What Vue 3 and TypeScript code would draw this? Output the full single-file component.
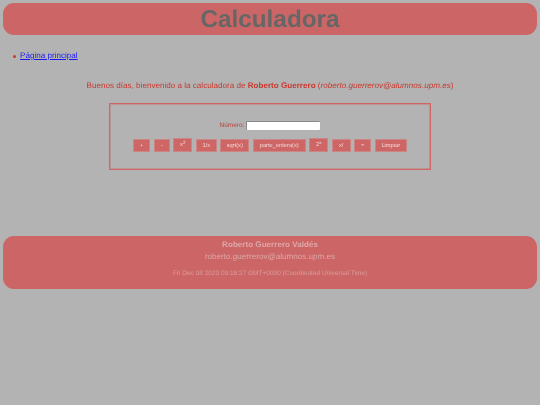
<script setup lang="ts">
const buttons: { label: string; sup?: string; cls: string }[] = [
  { label: '+', cls: 'w-plus' },
  { label: '-', cls: 'w-minus' },
  { label: 'x', sup: '2', cls: 'w-pow' },
  { label: '1/x', cls: 'w-inv' },
  { label: 'sqrt(x)', cls: 'w-sqrt' },
  { label: 'parte_entera(x)', cls: 'w-parte' },
  { label: '2', sup: 'x', cls: 'w-pow' },
  { label: 'x!', cls: 'w-fact' },
  { label: '=', cls: 'w-plus' },
  { label: 'Limpiar', cls: 'w-clear' },
]
</script>

<template>
  <div class="page">
    <header class="banner">
      <h1>Calculadora</h1>
    </header>
    <ul class="nav">
      <li><a href="#">Página principal</a></li>
    </ul>
    <p class="welcome">
      Buenos días, bienvenido a la calculadora de <strong>Roberto Guerrero</strong>
      (<em>roberto.guerrerov@alumnos.upm.es</em>)
    </p>
    <section class="calc">
      <div class="field">
        <label for="num">Número:</label>
        <input id="num" type="text" />
      </div>
      <div class="keys">
        <button v-for="b in buttons" :key="b.label + b.sup" type="button" :class="b.cls">
          {{ b.label }}<sup v-if="b.sup">{{ b.sup }}</sup>
        </button>
      </div>
    </section>
    <footer class="foot">
      <div class="name">Roberto Guerrero Valdés</div>
      <div class="mail">roberto.guerrerov@alumnos.upm.es</div>
      <div class="date">Fri Dec 08 2023 09:16:27 GMT+0000 (Coordinated Universal Time)</div>
    </footer>
  </div>
</template>

<style>
html, body {
  margin: 0;
  background: #b3b3b3;
}
</style>

<style scoped>
.page {
  height: 405px;
  box-sizing: border-box;
  padding: 3px;
  font-family: "Liberation Sans", Arial, sans-serif;
  color: #c9382d;
  background: #b3b3b3;
  display: flex;
  flex-direction: column;
  filter: blur(0.4px);
  text-rendering: geometricPrecision;
}
.banner {
  height: 32px;
  box-sizing: border-box;
  padding-top: 1px;
  background: #cc6666;
  border-radius: 11px;
  display: flex;
  align-items: center;
  justify-content: center;
}
h1 {
  margin: 0;
  font-size: 24.3px;
  font-weight: bold;
  color: #666;
  line-height: 31px;
}
.nav {
  margin: 15px 0 0;
  padding: 0 0 0 17px;
  font-size: 8.1px;
  line-height: 12px;
  list-style: none;
}
.nav li {
  position: relative;
}
.nav li::before {
  content: "";
  position: absolute;
  left: -7px;
  top: 5px;
  width: 3px;
  height: 3px;
  border-radius: 50%;
  background: #c9382d;
}
.nav a {
  color: #1a1aee;
}
.welcome {
  margin: 18px 0 0;
  text-align: center;
  font-size: 8.1px;
  line-height: 12px;
}
.calc {
  box-sizing: border-box;
  width: 322px;
  height: 67px;
  margin: 11px auto 0;
  border: 1px solid #cf6666;
  box-shadow: inset 0 0 0 1px rgba(204, 102, 102, 0.4);
  display: flex;
  flex-direction: column;
  align-items: center;
  padding-top: 17px;
}
.field {
  display: flex;
  align-items: center;
  gap: 2px;
  height: 9px;
  font-size: 6.5px;
  color: #b5443f;
}
input {
  box-sizing: border-box;
  width: 74px;
  height: 9px;
  padding: 0;
  margin: 0;
  background: #fff;
  border: 1px solid #8a8a8a;
  border-width: 1px 0 0 1px;
  border-radius: 1px;
}
.keys {
  display: flex;
  align-items: flex-end;
  gap: 3.5px;
  margin-top: 8px;
}
button {
  box-sizing: border-box;
  height: 13px;
  padding: 0;
  margin: 0;
  border: 1px solid #cb8585;
  background: #cf6666;
  color: #f2dada;
  font-family: "Liberation Sans", Arial, sans-serif;
  font-size: 5.7px;
  line-height: 10px;
  white-space: nowrap;
  text-rendering: geometricPrecision;
}
button.w-plus { width: 17px; }
button.w-minus { width: 16px; }
button.w-pow { width: 19px; height: 14px; }
button.w-inv { width: 21px; }
button.w-sqrt { width: 29px; }
button.w-parte { width: 53px; }
button.w-fact { width: 19px; }
button.w-clear { width: 32px; }
sup {
  font-size: 4.5px;
  line-height: 0;
  vertical-align: 2px;
}
.foot {
  height: 53px;
  box-sizing: border-box;
  margin-top: 66px;
  padding-top: 3px;
  background: #cc6666;
  border-radius: 11px;
  text-align: center;
  color: #dfa8a8;
}
.name {
  font-size: 8.1px;
  font-weight: bold;
  line-height: 12px;
}
.mail {
  font-size: 8.1px;
  line-height: 10px;
  margin-top: 1px;
}
.date {
  font-size: 6.5px;
  line-height: 8px;
  margin-top: 8px;
  color: #dc9a9a;
}
</style>
